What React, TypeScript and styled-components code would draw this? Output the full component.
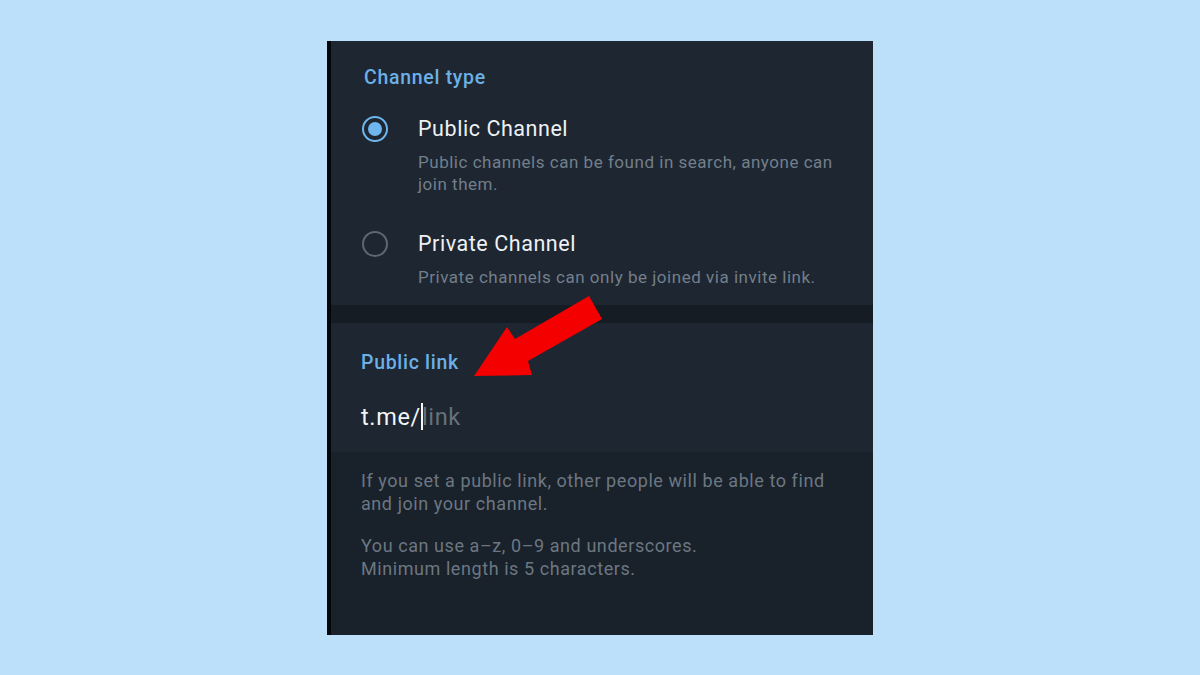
import React from "react";
import styled, { createGlobalStyle } from "styled-components";

const Global = createGlobalStyle`
  html, body { margin: 0; padding: 0; }
  body { background: #bcdffa; font-family: Roboto, "Noto Sans", "Liberation Sans", sans-serif; }
`;

const Page = styled.div`
  width: 1200px;
  height: 675px;
  display: flex;
  align-items: center;
  justify-content: center;
`;

const Panel = styled.div`
  position: relative;
  width: 546px;
  height: 594px;
  display: flex;
  flex-direction: column;
  border-left: 4px solid #050608;
  box-sizing: border-box;
  background: #19212b;
  overflow: hidden;
`;

const Section = styled.div<{ $h: number; $pt: number }>`
  background: #1d2631;
  height: ${(p) => p.$h}px;
  padding-top: ${(p) => p.$pt}px;
  box-sizing: border-box;
  display: flex;
  flex-direction: column;
`;

const Divider = styled.div`
  height: 18px;
  background: #151c24;
`;

const Header = styled.div<{ $pl: number }>`
  color: #6cb0e6;
  font-size: 19.5px;
  font-weight: 500;
  letter-spacing: 0.7px;
  padding-left: ${(p) => p.$pl}px;
  line-height: 24px;
`;

const Option = styled.div<{ $mt: number }>`
  display: flex;
  align-items: flex-start;
  padding-left: 31px;
  margin-top: ${(p) => p.$mt}px;
`;

const Radio = styled.div<{ $on?: boolean }>`
  width: 26px;
  height: 26px;
  box-sizing: border-box;
  border-radius: 50%;
  border: ${(p) => (p.$on ? "2.5px solid #6fb6ee" : "2px solid #5c6873")};
  display: flex;
  align-items: center;
  justify-content: center;
  margin-top: 1px;
  flex-shrink: 0;
  &::after {
    content: "";
    display: ${(p) => (p.$on ? "block" : "none")};
    width: 14px;
    height: 14px;
    border-radius: 50%;
    background: #6fb6ee;
  }
`;

const OptionText = styled.div`
  margin-left: 30px;
  display: flex;
  flex-direction: column;
`;

const Title = styled.div`
  color: #eef1f4;
  font-size: 21.5px;
  letter-spacing: 0.55px;
  line-height: 28px;
`;

const Sub = styled.div`
  color: #737f8b;
  font-size: 17px;
  letter-spacing: 0.52px;
  line-height: 22px;
  margin-top: 8px;
`;

const LinkRow = styled.div`
  padding-left: 30px;
  margin-top: 27px;
  font-size: 23.5px;
  letter-spacing: 0.65px;
  line-height: 30px;
  display: flex;
  align-items: center;
`;

const Prefix = styled.span`
  color: #f2f4f6;
`;

const Caret = styled.span`
  display: inline-block;
  width: 2px;
  height: 27px;
  background: #f5f7f9;
  margin: 0 -1px 0 0;
  position: relative;
  z-index: 1;
`;

const Placeholder = styled.span`
  color: #66717c;
`;

const Footer = styled.div`
  padding: 17px 30px 0 30px;
  display: flex;
  flex-direction: column;
  gap: 19px;
`;

const Hint = styled.div`
  color: #6c7782;
  font-size: 18px;
  letter-spacing: 0.57px;
  line-height: 23px;
`;

const Arrow = styled.svg`
  position: absolute;
  left: 0;
  top: 0;
  width: 546px;
  height: 594px;
  pointer-events: none;
`;

export default function App() {
  // arrow coordinates relative to panel (panel origin at 327,40)
  const pts = [
    [470, 375],
    [503, 326],
    [511, 338],
    [585, 295],
    [598, 318],
    [524, 360],
    [528, 374],
  ]
    .map(([x, y]) => `${x - 327},${y - 40}`)
    .join(" ");
  return (
    <>
      <Global />
      <Page>
        <Panel>
          <Section $h={264} $pt={25}>
            <Header $pl={33}>Channel type</Header>
            <Option $mt={25}>
              <Radio $on />
              <OptionText>
                <Title>Public Channel</Title>
                <Sub>
                  Public channels can be found in search, anyone can
                  <br />
                  join them.
                </Sub>
              </OptionText>
            </Option>
            <Option $mt={35}>
              <Radio />
              <OptionText>
                <Title>Private Channel</Title>
                <Sub>Private channels can only be joined via invite link.</Sub>
              </OptionText>
            </Option>
          </Section>
          <Divider />
          <Section $h={129} $pt={28}>
            <Header $pl={30}>Public link</Header>
            <LinkRow>
              <Prefix>t.me/</Prefix>
              <Caret />
              <Placeholder>link</Placeholder>
            </LinkRow>
          </Section>
          <Footer>
            <Hint>
              If you set a public link, other people will be able to find
              <br />
              and join your channel.
            </Hint>
            <Hint>
              You can use a–z, 0–9 and underscores.
              <br />
              Minimum length is 5 characters.
            </Hint>
          </Footer>
          <Arrow viewBox="0 0 546 594">
            <polygon points={pts} fill="#f40000" />
          </Arrow>
        </Panel>
      </Page>
    </>
  );
}
